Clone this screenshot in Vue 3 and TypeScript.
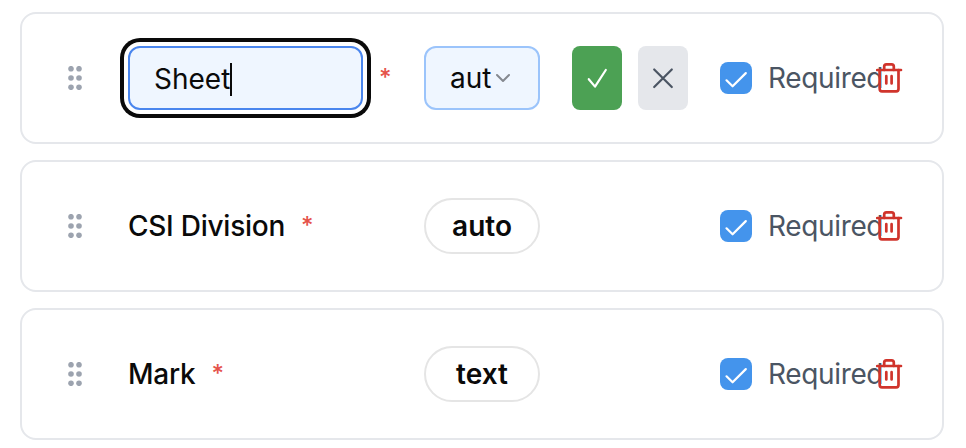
<script setup lang="ts">
import { ref } from 'vue'

interface Field {
  name: string
  type: string
  required: boolean
  editing: boolean
}

const fields = ref<Field[]>([
  { name: 'Sheet', type: 'aut', required: true, editing: true },
  { name: 'CSI Division', type: 'auto', required: true, editing: false },
  { name: 'Mark', type: 'text', required: true, editing: false },
])

const dots = [2.7, 12, 21.3].flatMap((y) => [3, 11].map((x) => ({ x, y })))
</script>

<template>
  <main class="list">
    <section v-for="field in fields" :key="field.name" class="card">
      <svg class="handle" width="16" height="24" viewBox="0 0 16 24">
        <circle v-for="(d, i) in dots" :key="i" :cx="d.x" :cy="d.y" r="2.8" />
      </svg>

      <div class="name-cell">
        <template v-if="field.editing">
          <div class="name-input"><span>{{ field.name }}</span><i class="caret"></i></div>
          <span class="star">*</span>
        </template>
        <template v-else>
          <span class="name">{{ field.name }}</span>
          <span class="star">*</span>
        </template>
      </div>

      <div v-if="field.editing" class="select">
        <span>{{ field.type }}</span>
        <svg width="16" height="16" viewBox="0 0 16 16">
          <path d="M2 5L8 11L14 5" />
        </svg>
      </div>
      <div v-else class="pill">{{ field.type }}</div>

      <div class="actions">
        <template v-if="field.editing">
          <button class="btn save" aria-label="Save">
            <svg width="50" height="64" viewBox="0 0 50 64">
              <path d="M16.8 33.2L23 40.6L33.8 24" />
            </svg>
          </button>
          <button class="btn cancel" aria-label="Cancel">
            <svg width="50" height="64" viewBox="0 0 50 64">
              <path d="M16.2 23.5L33.8 41M33.8 23.5L16.2 41" />
            </svg>
          </button>
        </template>
      </div>

      <label class="required">
        <span class="box">
          <svg width="32" height="32" viewBox="0 0 32 32">
            <path d="M6.5 18.3L12.6 24.3L25.8 11.1" />
          </svg>
        </span>
        <span class="label">Required</span>
      </label>

      <svg class="trash" width="28" height="32" viewBox="0 0 28 32">
        <path d="M1.2 8H25" />
        <path d="M8.2 8V4.6Q8.2 2.4 10.4 2.4H15.6Q17.8 2.4 17.8 4.6V8" />
        <path d="M3.7 8V27Q3.7 29.3 6 29.3H20.2Q22.5 29.3 22.5 27V8" />
        <path d="M10.3 14.2V21.4M15.6 14.2V21.4" />
      </svg>
    </section>
  </main>
</template>

<style>
body {
  margin: 0;
  background: #fff;
  overflow: hidden;
}
</style>

<style scoped>
.list {
  box-sizing: border-box;
  width: 966px;
  height: 448px;
  overflow: hidden;
  padding: 12px 22px 0 20px;
  display: flex;
  flex-direction: column;
  gap: 16px;
  font-family: Inter, sans-serif;
  font-size: 28px;
  line-height: 40px;
  color: #0a0a0a;
}
.card {
  box-sizing: border-box;
  flex: none;
  height: 132px;
  border: 2px solid #e5e7eb;
  border-radius: 16px;
  padding-left: 46px;
  display: grid;
  grid-template-columns: 60px 296px 148px 148px 156px 28px;
  align-items: center;
}
.handle {
  display: block;
  fill: #9ca3af;
}
.name-cell {
  display: flex;
  align-items: center;
}
.name {
  font-weight: 500;
  letter-spacing: -0.25px;
}
.name-input {
  box-sizing: border-box;
  width: 235px;
  height: 64px;
  border: 2px solid #4a86ee;
  border-radius: 12px;
  background: #eff6ff;
  box-shadow: 0 0 0 4px #fff, 0 0 0 8px #0a0a0a;
  padding: 2px 0 0 24px;
  display: flex;
  align-items: center;
}
.caret {
  width: 2px;
  height: 33px;
  background: #0a0a0a;
}
.star {
  margin-left: 16px;
  color: #e5534b;
  font-size: 24px;
  font-weight: 500;
  line-height: 40px;
}
.select,
.pill {
  box-sizing: border-box;
  width: 116px;
  display: flex;
  align-items: center;
}
.select {
  height: 64px;
  padding-left: 24px;
  border: 2px solid #9bc4fb;
  border-radius: 12px;
  background: #eff6ff;
}
.select svg {
  margin-left: 3.5px;
}
.select path {
  fill: none;
  stroke: #858990;
  stroke-width: 2;
  stroke-linecap: round;
  stroke-linejoin: round;
}
.pill {
  height: 56px;
  justify-content: center;
  border: 2px solid #e5e5e5;
  border-radius: 28px;
  font-weight: 600;
}
.actions {
  display: flex;
  gap: 16px;
}
.btn {
  width: 50px;
  height: 64px;
  padding: 0;
  border: 0;
  border-radius: 8px;
}
.btn svg,
.box svg,
.trash {
  display: block;
  fill: none;
  stroke-linecap: round;
  stroke-linejoin: round;
}
.save {
  background: #4ca154;
}
.save svg {
  stroke: #fff;
  stroke-width: 2.2;
}
.cancel {
  background: #e5e7eb;
}
.cancel svg {
  stroke: #4b5563;
  stroke-width: 2.2;
}
.required {
  display: flex;
  align-items: center;
  gap: 16px;
  color: #4b5563;
  white-space: nowrap;
}
.label {
  letter-spacing: -0.35px;
}
.box {
  flex: none;
  width: 32px;
  height: 32px;
  border-radius: 8px;
  background: #4494ec;
}
.box svg {
  stroke: #fff;
  stroke-width: 2.2;
}
.trash {
  stroke: #d0342c;
  stroke-width: 2.7;
}
</style>
